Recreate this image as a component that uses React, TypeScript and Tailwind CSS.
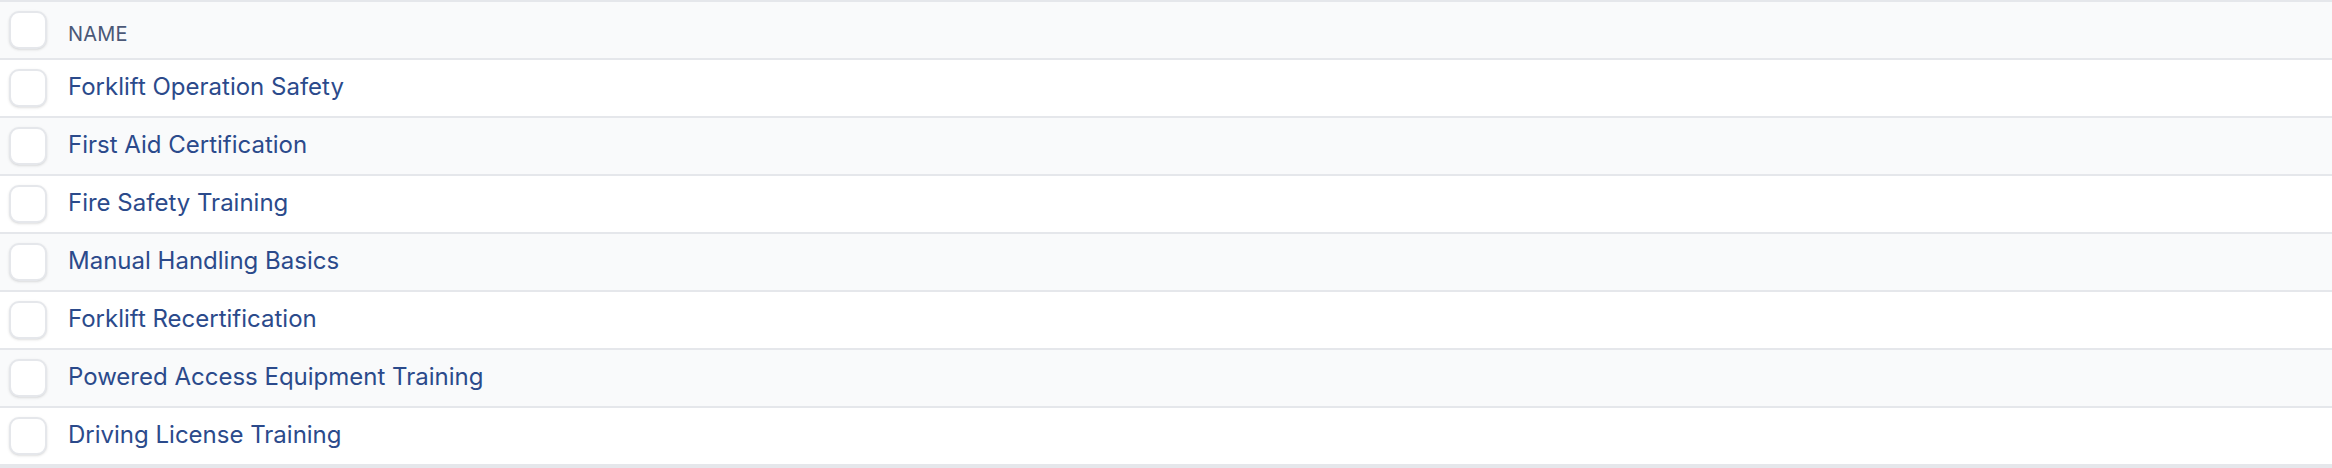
const trainings = [
  "Forklift Operation Safety",
  "First Aid Certification",
  "Fire Safety Training",
  "Manual Handling Basics",
  "Forklift Recertification",
  "Powered Access Equipment Training",
  "Driving License Training",
];

// Checkbox
// Plain rounded box, unchecked in every row
const Checkbox = () => (
  <span className="block w-[38px] h-[38px] shrink-0 rounded-[10px] border-2 border-[#e5e7eb] bg-white shadow-sm" />
);

const App = () => {
  return (
    <div className="w-full min-h-[468px] bg-[#e5e7eb] font-['Inter',sans-serif]">
      <div className="border-t-2 border-[#e5e7eb]">
        {/* Header */}
        <div className="flex items-center gap-[21px] h-[58px] pl-[9px] bg-[#f9fafb] border-b-2 border-[#e5e7eb]">
          <Checkbox />
          <span className="mt-[8px] text-[20px] uppercase text-[#4b5877] tracking-[0.01em]">Name</span>
        </div>

        {/* Rows */}
        {trainings.map((name, i) => (
          <div
            key={name}
            className={
              i % 2 === 0
                ? "flex items-center gap-[21px] h-[58px] pl-[9px] bg-white border-b-2 border-[#e5e7eb]"
                : "flex items-center gap-[21px] h-[58px] pl-[9px] bg-[#f9fafb] border-b-2 border-[#e5e7eb]"
            }
          >
            <Checkbox />
            <span className="mb-[3px] text-[24px] text-[#2b4a8b]">{name}</span>
          </div>
        ))}
      </div>
    </div>
  );
};

export default App;
